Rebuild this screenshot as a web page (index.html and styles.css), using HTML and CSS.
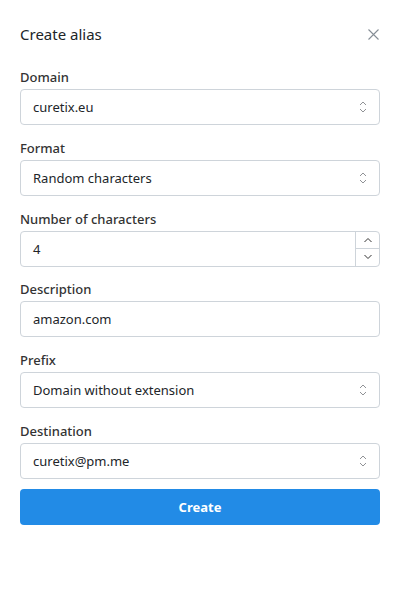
FILE: index.html
```html
<!DOCTYPE html>
<html>
<head>
<meta charset="utf-8">
<link rel="stylesheet" href="styles.css">
</head>
<body>
<div class="modal">
  <div class="header">
    <h2 class="title">Create alias</h2>
    <button class="close" aria-label="Close">
      <svg width="11" height="11" viewBox="0 0 11 11"><path d="M0.5 0.5L10.5 10.5M10.5 0.5L0.5 10.5" stroke="#868e96" stroke-width="1.1" fill="none"/></svg>
    </button>
  </div>
  <form class="form">
    <div class="field">
      <label class="label">Domain</label>
      <div class="input select"><span>curetix.eu</span><svg class="chev" width="8" height="12" viewBox="0 0 8 12"><path d="M1 4L4 1L7 4M1 8L4 11L7 8" stroke="#909296" stroke-width="1" fill="none"/></svg></div>
    </div>
    <div class="field">
      <label class="label">Format</label>
      <div class="input select"><span>Random characters</span><svg class="chev" width="8" height="12" viewBox="0 0 8 12"><path d="M1 4L4 1L7 4M1 8L4 11L7 8" stroke="#909296" stroke-width="1" fill="none"/></svg></div>
    </div>
    <div class="field">
      <label class="label">Number of characters</label>
      <div class="input number"><span>4</span>
        <div class="controls">
          <div class="ctl"><svg width="10" height="6" viewBox="0 0 10 6"><path d="M1.5 5L5 1.5L8.5 5" stroke="#333" stroke-width="1" fill="none"/></svg></div>
          <div class="ctl ctl-down"><svg width="10" height="6" viewBox="0 0 10 6"><path d="M1.5 1L5 4.5L8.5 1" stroke="#333" stroke-width="1" fill="none"/></svg></div>
        </div>
      </div>
    </div>
    <div class="field">
      <label class="label">Description</label>
      <div class="input"><span>amazon.com</span></div>
    </div>
    <div class="field">
      <label class="label">Prefix</label>
      <div class="input select"><span>Domain without extension</span><svg class="chev" width="8" height="12" viewBox="0 0 8 12"><path d="M1 4L4 1L7 4M1 8L4 11L7 8" stroke="#909296" stroke-width="1" fill="none"/></svg></div>
    </div>
    <div class="field">
      <label class="label">Destination</label>
      <div class="input select"><span>curetix@pm.me</span><svg class="chev" width="8" height="12" viewBox="0 0 8 12"><path d="M1 4L4 1L7 4M1 8L4 11L7 8" stroke="#909296" stroke-width="1" fill="none"/></svg></div>
    </div>
    <button type="button" class="submit">Create</button>
  </form>
</div>
</body>
</html>
```
FILE: styles.css
```css
* { box-sizing: border-box; }
html, body { margin: 0; background: #fff; }
body {
  font-family: "Noto Sans", "Open Sans", sans-serif;
  color: #212529;
  width: 400px;
  height: 600px;
}
.modal { padding: 22px 20px 20px; }
.header {
  display: flex;
  justify-content: space-between;
  align-items: center;
  height: 24px;
  margin-bottom: 22px;
}
.title {
  margin: 0;
  font-size: 15px;
  font-weight: 400;
  color: #212529;
}
.close {
  border: 0;
  background: none;
  padding: 0;
  width: 14px;
  height: 14px;
  display: flex;
  align-items: center;
  justify-content: center;
  margin-right: 0;
}
.form { display: flex; flex-direction: column; }
.field { display: flex; flex-direction: column; margin-bottom: 13.8px; }
.label {
  font-size: 13px;
  font-weight: 500;
  line-height: 18px;
  margin-bottom: 3px;
  color: #333;
}
.input {
  height: 36px;
  border: 1px solid #ced4da;
  border-radius: 4px;
  display: flex;
  align-items: center;
  padding: 0 12px;
  font-size: 13px;
  color: #212529;
  position: relative;
}
.select { justify-content: space-between; }
.chev { margin-right: 0; }
.number { padding-right: 0; }
.number span { flex: 1; }
.controls {
  align-self: stretch;
  width: 24px;
  border-left: 1px solid #ced4da;
  display: flex;
  flex-direction: column;
}
.ctl {
  flex: 1;
  display: flex;
  align-items: center;
  justify-content: center;
}
.ctl-down { border-top: 1px solid #ced4da; }
.submit {
  margin-top: -3.5px;
  height: 36px;
  border: 0;
  border-radius: 4px;
  background: #228be6;
  color: #fff;
  font-family: inherit;
  font-size: 13px;
  font-weight: 700;
}
```
